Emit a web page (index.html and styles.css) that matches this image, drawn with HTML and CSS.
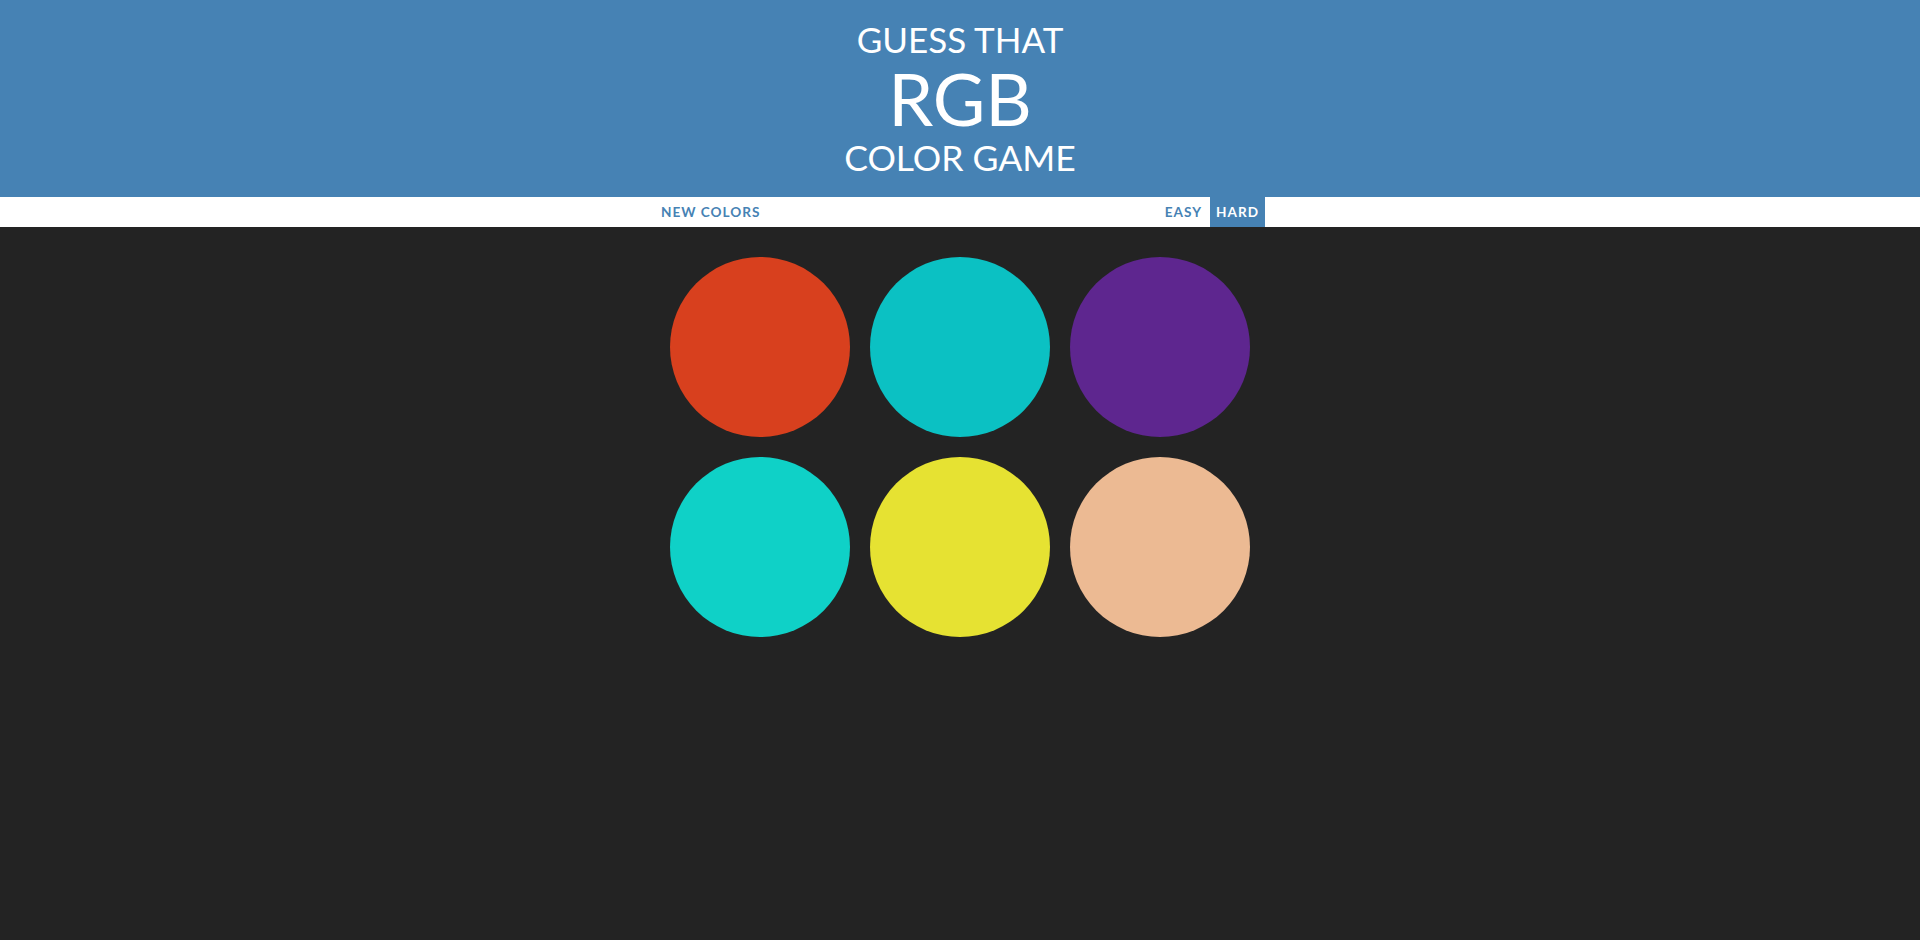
FILE: index.html
```html
<!DOCTYPE html>
<html lang="en">
<head>
<meta charset="utf-8">
<title>Color Game</title>
<link rel="stylesheet" href="styles.css">
</head>
<body>
<header class="header">
  <div class="title-small">GUESS THAT</div>
  <div class="title-big">RGB</div>
  <div class="title-bottom">COLOR GAME</div>
</header>
<nav class="stripe">
  <div class="stripe-inner">
    <button class="btn">New Colors</button>
    <div class="modes">
      <button class="btn easy">Easy</button>
      <button class="btn selected">Hard</button>
    </div>
  </div>
</nav>
<main class="board">
  <div class="square red"></div>
  <div class="square teal"></div>
  <div class="square purple"></div>
  <div class="square aqua"></div>
  <div class="square yellow"></div>
  <div class="square peach"></div>
</main>
</body>
</html>
```
FILE: styles.css
```css
html, body {
  margin: 0;
  padding: 0;
}
body {
  background: #232323;
  font-family: Lato, "Open Sans", sans-serif;
  min-height: 940px;
}
.header {
  background: #4682b4;
  color: #fff;
  text-align: center;
  padding: 20px 0 21px;
  font-weight: 400;
}
.title-small {
  font-size: 35px;
  line-height: 38px;
}
.title-big {
  font-size: 72px;
  line-height: 81px;
}
.title-bottom {
  font-size: 35.5px;
  line-height: 37px;
}
.stripe {
  background: #fff;
  height: 30px;
}
.stripe-inner {
  width: 610px;
  margin: 0 auto;
  height: 30px;
  display: flex;
  justify-content: space-between;
}
.modes {
  display: flex;
}
.btn {
  border: none;
  background: none;
  margin: 0;
  height: 30px;
  padding: 0 6px;
  font-family: Lato, sans-serif;
  font-weight: 700;
  font-size: 13.6px;
  letter-spacing: 1px;
  text-transform: uppercase;
  color: #4682b4;
  line-height: 30px;
}
.btn.easy {
  padding-right: 8px;
}
.btn.selected {
  background: #4682b4;
  color: #fff;
}
.board {
  width: 580px;
  margin: 30px auto 0;
  display: grid;
  grid-template-columns: repeat(3, 180px);
  gap: 20px;
}
.square {
  width: 180px;
  height: 180px;
  border-radius: 50%;
}
.red { background: #d8401e; }
.teal { background: #0bc1c3; }
.purple { background: #5e268f; }
.aqua { background: #0fd1c7; }
.yellow { background: #e6e232; }
.peach { background: #ecba93; }
```
